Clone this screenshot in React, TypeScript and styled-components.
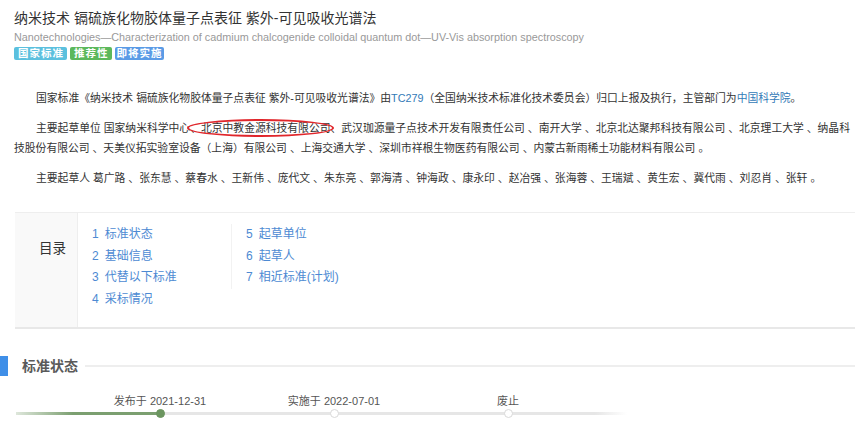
import React from "react";
import styled, { createGlobalStyle } from "styled-components";

const GlobalStyle = createGlobalStyle`
  html, body { margin: 0; padding: 0; background: #fff; }
  body {
    font-family: "Liberation Sans", "Noto Sans CJK SC", sans-serif;
    color: #333;
  }
`;

const Page = styled.div`
  width: 864px;
  box-sizing: border-box;
  padding: 8px 9px 0 14px;
`;

const Title = styled.h1`
  margin: 0;
  font-size: 14px;
  line-height: 20px;
  font-weight: normal;
  color: #333;
`;

const Subtitle = styled.div`
  font-size: 10.8px;
  line-height: 18px;
  color: #999;
`;

const Tags = styled.div`
  display: flex;
  gap: 3px;
  margin-top: 1px;
`;

const Tag = styled.span<{ $bg: string; $pad: number }>`
  background: ${(p) => p.$bg};
  color: #fff;
  font-size: 10.5px;
  line-height: 13px;
  padding: 0 ${(p) => p.$pad}px 0 ${(p) => p.$pad + 1}px;
  border-radius: 2px;
  font-weight: bold;
  letter-spacing: 1px;
`;

const Intro = styled.div`
  margin-top: 28px;
  font-size: 10.8px;
  line-height: 20px;
  color: #333;
`;

const Para = styled.p`
  margin: 0 0 10px;
  text-indent: 22px;
  &:last-child { margin-bottom: 0; }
`;

const Link = styled.a`
  color: #337ab7;
  text-decoration: none;
`;

const Circled = styled.span`
  position: relative;
  &::after {
    content: "";
    position: absolute;
    left: -3px;
    right: -3px;
    top: -3px;
    bottom: -3px;
    border: 2px solid #e0262b;
    border-radius: 50%;
    pointer-events: none;
  }
`;

const Toc = styled.div`
  display: grid;
  grid-template-columns: 63px 1fr;
  margin: 24px 0 0 1px;
  border-top: 1px solid #eee;
  border-bottom: 2px solid #e8e8e8;
`;

const TocLabel = styled.div`
  background: #f9f9f9;
  border-right: 1px solid #eee;
  text-align: right;
  padding: 26px 11px 0 0;
  font-size: 13.5px;
  line-height: 20px;
  color: #333;
`;

const TocBody = styled.div`
  display: flex;
  align-items: flex-start;
  padding: 11px 0 16px 14px;
`;

const TocCol = styled.ul<{ $divider?: boolean }>`
  list-style: none;
  margin: 0;
  padding: 0 0 0 ${(p) => (p.$divider ? 14 : 0)}px;
  width: ${(p) => (p.$divider ? "auto" : "139px")};
  border-left: ${(p) => (p.$divider ? "1px solid #f2f2f2" : "none")};
`;

const TocItem = styled.li`
  font-size: 12px;
  line-height: 21.7px;
  color: #4d8ad3;
  white-space: nowrap;
`;

const Num = styled.span`
  margin-right: 6px;
`;

const SectionHead = styled.div`
  display: flex;
  align-items: center;
  margin: 27px 0 0 -14px;
  height: 20px;
`;

const SectionBar = styled.span`
  width: 8px;
  height: 20px;
  background: #3f8fe8;
`;

const SectionTitle = styled.h2`
  margin: 0 7px 0 14px;
  font-size: 14px;
  line-height: 20px;
  color: #5a5a5a;
  font-weight: bold;
`;

const SectionRule = styled.span`
  flex: 1;
  height: 2px;
  background: #eee;
`;

const Timeline = styled.div`
  display: flex;
  align-items: flex-end;
  margin: 17px 0 0 2px;
`;

const GREEN = "#7b9f70";
const GRAY = "#e6e6e6";

const Lead = styled.div`
  width: 57px;
  height: 10px;
  background: linear-gradient(to right, rgba(123, 159, 112, 0.25), ${GREEN}) center / 100% 3px no-repeat;
`;

const Tail = styled.div`
  width: 32px;
  height: 10px;
  background: linear-gradient(to right, ${GRAY}, rgba(230, 230, 230, 0)) center / 100% 3px no-repeat;
`;

const Step = styled.div`
  width: 174px;
  display: flex;
  flex-direction: column;
  align-items: stretch;
`;

const StepLabel = styled.div`
  font-size: 11px;
  line-height: 16px;
  color: #555;
  text-align: center;
  white-space: nowrap;
`;

const Rail = styled.div<{ $current?: boolean }>`
  height: 10px;
  display: flex;
  align-items: center;
  justify-content: center;
  background: ${(p) =>
      p.$current
        ? `linear-gradient(to right, ${GREEN} 50%, ${GRAY} 50%)`
        : `linear-gradient(${GRAY}, ${GRAY})`}
    center / 100% 3px no-repeat;
`;

const Dot = styled.span<{ $done?: boolean }>`
  width: 9px;
  height: 9px;
  box-sizing: border-box;
  border-radius: 50%;
  background: ${(p) => (p.$done ? "#6b955f" : "#fff")};
  border: ${(p) => (p.$done ? "1px solid #6b955f" : "1.5px solid #d9d9d9")};
`;

const tocLeft = ["标准状态", "基础信息", "代替以下标准", "采标情况"];
const tocRight = ["起草单位", "起草人", "相近标准(计划)"];

const drafters = [
  "葛广路", "张东慧", "蔡春水", "王新伟", "庞代文", "朱东亮", "郭海清", "钟海政",
  "康永印", "赵冶强", "张海蓉", "王瑞斌", "黄生宏", "冀代雨", "刘忍肖", "张轩",
];

const steps = [
  { label: "发布于 2021-12-31", done: true, current: true },
  { label: "实施于 2022-07-01", done: false, current: false },
  { label: "废止", done: false, current: false },
];

export default function App() {
  return (
    <>
      <GlobalStyle />
      <Page>
        <Title>纳米技术 镉硫族化物胶体量子点表征 紫外-可见吸收光谱法</Title>
        <Subtitle>
          Nanotechnologies—Characterization of cadmium chalcogenide colloidal quantum dot—UV-Vis absorption spectroscopy
        </Subtitle>
        <Tags>
          <Tag $bg="#5bc0de" $pad={3}>国家标准</Tag>
          <Tag $bg="#5cb85c" $pad={3}>推荐性</Tag>
          <Tag $bg="#5a9be6" $pad={1}>即将实施</Tag>
        </Tags>

        <Intro>
          <Para>
            国家标准《纳米技术 镉硫族化物胶体量子点表征 紫外-可见吸收光谱法》由<Link>TC279</Link>（全国纳米技术标准化技术委员会）归口上报及执行，主管部门为<Link>中国科学院</Link>。
          </Para>
          <Para>
            主要起草单位 国家纳米科学中心<Circled>、北京中教金源科技有限公司</Circled>、武汉珈源量子点技术开发有限责任公司 、南开大学 、北京北达聚邦科技有限公司 、北京理工大学 、纳晶科技股份有限公司 、天美仪拓实验室设备（上海）有限公司 、上海交通大学 、深圳市祥根生物医药有限公司 、内蒙古新雨稀土功能材料有限公司 。
          </Para>
          <Para>
            主要起草人 {drafters.join(" 、")} 。
          </Para>
        </Intro>

        <Toc>
          <TocLabel>目录</TocLabel>
          <TocBody>
            <TocCol>
              {tocLeft.map((t, i) => (
                <TocItem key={t}>
                  <Num>{i + 1}</Num>
                  {t}
                </TocItem>
              ))}
            </TocCol>
            <TocCol $divider>
              {tocRight.map((t, i) => (
                <TocItem key={t}>
                  <Num>{i + 5}</Num>
                  {t}
                </TocItem>
              ))}
            </TocCol>
          </TocBody>
        </Toc>

        <SectionHead>
          <SectionBar />
          <SectionTitle>标准状态</SectionTitle>
          <SectionRule />
        </SectionHead>

        <Timeline>
          <Lead />
          {steps.map((s) => (
            <Step key={s.label}>
              <StepLabel>{s.label}</StepLabel>
              <Rail $current={s.current}>
                <Dot $done={s.done} />
              </Rail>
            </Step>
          ))}
          <Tail />
        </Timeline>
      </Page>
    </>
  );
}
